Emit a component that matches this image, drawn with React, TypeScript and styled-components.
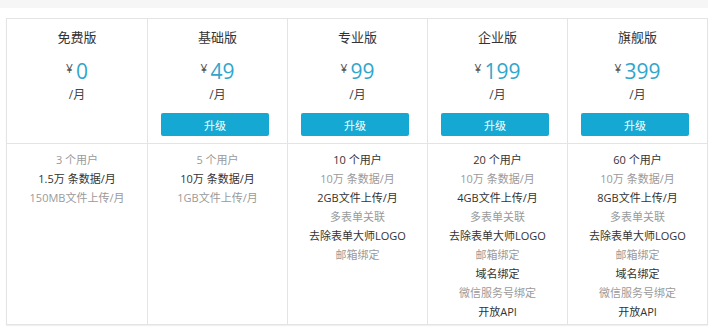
import styled, { createGlobalStyle } from "styled-components";

type Feature = { text: string; strong?: boolean };
type Plan = { name: string; price: number; upgrade: boolean; features: Feature[] };

const plans: Plan[] = [
  {
    name: "免费版",
    price: 0,
    upgrade: false,
    features: [
      { text: "3 个用户" },
      { text: "1.5万 条数据/月", strong: true },
      { text: "150MB文件上传/月" },
    ],
  },
  {
    name: "基础版",
    price: 49,
    upgrade: true,
    features: [
      { text: "5 个用户" },
      { text: "10万 条数据/月", strong: true },
      { text: "1GB文件上传/月" },
    ],
  },
  {
    name: "专业版",
    price: 99,
    upgrade: true,
    features: [
      { text: "10 个用户", strong: true },
      { text: "10万 条数据/月" },
      { text: "2GB文件上传/月", strong: true },
      { text: "多表单关联" },
      { text: "去除表单大师LOGO", strong: true },
      { text: "邮箱绑定" },
    ],
  },
  {
    name: "企业版",
    price: 199,
    upgrade: true,
    features: [
      { text: "20 个用户", strong: true },
      { text: "10万 条数据/月" },
      { text: "4GB文件上传/月", strong: true },
      { text: "多表单关联" },
      { text: "去除表单大师LOGO", strong: true },
      { text: "邮箱绑定" },
      { text: "域名绑定", strong: true },
      { text: "微信服务号绑定" },
      { text: "开放API", strong: true },
    ],
  },
  {
    name: "旗舰版",
    price: 399,
    upgrade: true,
    features: [
      { text: "60 个用户", strong: true },
      { text: "10万 条数据/月" },
      { text: "8GB文件上传/月", strong: true },
      { text: "多表单关联" },
      { text: "去除表单大师LOGO", strong: true },
      { text: "邮箱绑定" },
      { text: "域名绑定", strong: true },
      { text: "微信服务号绑定" },
      { text: "开放API", strong: true },
    ],
  },
];

const App = () => {
  return (
    <>
      <GlobalStyle />
      <Page>
        <TopBar />
        <Table>
          {plans.map((plan) => (
            <Column key={plan.name}>
              <Head>
                <Title>{plan.name}</Title>
                <PriceRow>
                  <Currency>¥</Currency>
                  <Amount>{plan.price}</Amount>
                </PriceRow>
                <Unit>/月</Unit>
                {plan.upgrade ? <UpgradeButton>升级</UpgradeButton> : null}
              </Head>
              <Features>
                {plan.features.map((f) => (
                  <FeatureItem key={f.text} $strong={f.strong}>
                    {f.text}
                  </FeatureItem>
                ))}
              </Features>
            </Column>
          ))}
        </Table>
      </Page>
    </>
  );
};

export default App;

const GlobalStyle = createGlobalStyle`
  body {
    margin: 0;
    background: #fff;
    font-family: "Open Sans", "Noto Sans CJK SC", sans-serif;
    color: #333;
  }
`;

const Page = styled.div`
  width: 720px;
  height: 331px;
  display: flex;
  flex-direction: column;
`;

const TopBar = styled.div`
  width: 708px;
  height: 8px;
  background: #f6f6f6;
  margin-bottom: 10px;
`;

const Table = styled.div`
  margin-left: 6px;
  width: 702px;
  height: 307px;
  box-sizing: border-box;
  border: 1px solid #e4e4e4;
  box-shadow: 0 1px 1px rgba(0, 0, 0, 0.06);
  display: grid;
  grid-template-columns: repeat(5, 1fr);
`;

const Column = styled.div`
  display: flex;
  flex-direction: column;
  & + & {
    border-left: 1px solid #e4e4e4;
  }
`;

const Head = styled.div`
  height: 125px;
  box-sizing: border-box;
  padding-top: 8px;
  border-bottom: 1px solid #e4e4e4;
  display: flex;
  flex-direction: column;
  align-items: center;
`;

const Title = styled.div`
  font-size: 13px;
  line-height: 20px;
  color: #333;
`;

const PriceRow = styled.div`
  margin-top: 9px;
  height: 30px;
  display: flex;
  align-items: center;
  gap: 3px;
`;

const Currency = styled.span`
  font-size: 12px;
  color: #555;
  position: relative;
  top: -3px;
`;

const Amount = styled.span`
  font-size: 21px;
  line-height: 30px;
  color: #30a6cc;
`;

const Unit = styled.div`
  font-size: 12px;
  line-height: 18px;
  color: #444;
`;

const UpgradeButton = styled.button`
  margin-top: 9px;
  align-self: flex-start;
  margin-left: 13px;
  width: 108px;
  height: 23px;
  border: none;
  border-radius: 2px;
  background: #14a8d3;
  color: #fff;
  font-family: inherit;
  font-size: 11px;
  padding: 0;
  cursor: pointer;
`;

const Features = styled.div`
  padding-top: 6px;
  display: flex;
  flex-direction: column;
  align-items: center;
`;

const FeatureItem = styled.div<{ $strong?: boolean }>`
  font-size: 11px;
  line-height: 19px;
  color: ${(p) => (p.$strong ? "#333" : "#9a9a9a")};
`;
